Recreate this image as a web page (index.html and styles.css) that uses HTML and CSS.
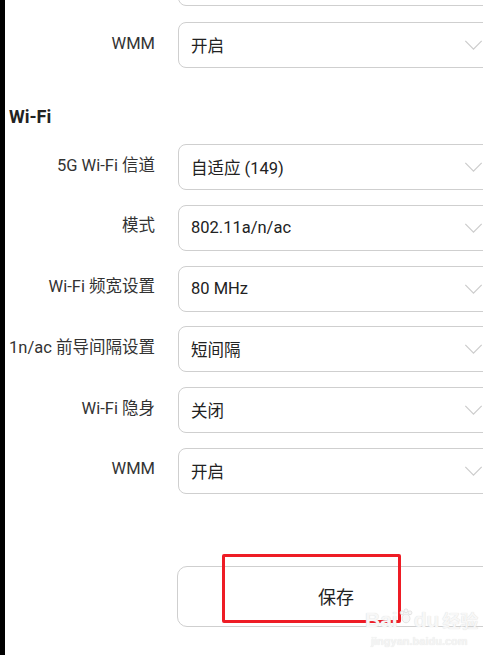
FILE: index.html
```html
<!DOCTYPE html>
<html lang="zh-CN">
  <head>
    <meta charset="UTF-8" />
    <meta name="viewport" content="width=device-width, initial-scale=1.0" />
    <title>Wi-Fi 设置</title>
    <link rel="stylesheet" href="styles.css">
  </head>
  <body>
    <div class="screen">
      <div class="form-row form-row-cut">
        <label class="form-label"></label>
        <div class="select"><span class="select-value"></span></div>
      </div>
      <div class="form-row">
        <label class="form-label">WMM</label>
        <div class="select">
          <span class="select-value">开启</span>
          <svg class="chevron" viewBox="0 0 20 11"><path d="M1 1 L10 10 L19 1" /></svg>
        </div>
      </div>

      <h3 class="section-title">Wi-Fi</h3>

      <div class="form-row">
        <label class="form-label">5G Wi-Fi 信道</label>
        <div class="select">
          <span class="select-value">自适应 (149)</span>
          <svg class="chevron" viewBox="0 0 20 11"><path d="M1 1 L10 10 L19 1" /></svg>
        </div>
      </div>
      <div class="form-row">
        <label class="form-label">模式</label>
        <div class="select">
          <span class="select-value">802.11a/n/ac</span>
          <svg class="chevron" viewBox="0 0 20 11"><path d="M1 1 L10 10 L19 1" /></svg>
        </div>
      </div>
      <div class="form-row">
        <label class="form-label">Wi-Fi 频宽设置</label>
        <div class="select">
          <span class="select-value">80 MHz</span>
          <svg class="chevron" viewBox="0 0 20 11"><path d="M1 1 L10 10 L19 1" /></svg>
        </div>
      </div>
      <div class="form-row">
        <label class="form-label">1n/ac 前导间隔设置</label>
        <div class="select">
          <span class="select-value">短间隔</span>
          <svg class="chevron" viewBox="0 0 20 11"><path d="M1 1 L10 10 L19 1" /></svg>
        </div>
      </div>
      <div class="form-row">
        <label class="form-label">Wi-Fi 隐身</label>
        <div class="select">
          <span class="select-value">关闭</span>
          <svg class="chevron" viewBox="0 0 20 11"><path d="M1 1 L10 10 L19 1" /></svg>
        </div>
      </div>
      <div class="form-row">
        <label class="form-label">WMM</label>
        <div class="select">
          <span class="select-value">开启</span>
          <svg class="chevron" viewBox="0 0 20 11"><path d="M1 1 L10 10 L19 1" /></svg>
        </div>
      </div>

      <div class="actions">
        <button class="save-btn">保存</button>
        <div class="highlight"></div>
      </div>

      <div class="watermark">
        <div class="wm-logo">
          <span>Bai</span>
          <svg class="wm-paw" viewBox="0 0 20 20">
            <circle cx="5" cy="6" r="2.4" />
            <circle cx="10" cy="3.5" r="2.4" />
            <circle cx="15" cy="6" r="2.4" />
            <ellipse cx="10" cy="13" rx="5" ry="5.5" />
          </svg>
          <span>du</span>
          <span class="wm-cn">经验</span>
        </div>
        <div class="wm-url">jingyan.baidu.com</div>
      </div>
    </div>
  </body>
</html>
```

FILE: styles.css
```css
body {
  margin: 0;
  height: 655px;
  overflow: hidden;
  background-color: #000;
  font-family: Roboto, "Noto Sans CJK SC", sans-serif;
}

.screen {
  position: relative;
  margin-left: 5px;
  height: 655px;
  overflow: hidden;
  background-color: #fff;
}

.form-row {
  display: flex;
  align-items: center;
  gap: 23px;
  margin-bottom: 14.8px;
}

.form-row-cut {
  margin-top: -40px;
  margin-bottom: 16px;
}

.form-label {
  flex: none;
  width: 150px;
  display: flex;
  justify-content: flex-end;
  white-space: nowrap;
  font-size: 16.5px;
  line-height: 20px;
  margin-top: -3px;
  color: #333;
}

.select {
  flex: none;
  box-sizing: border-box;
  width: 315px;
  height: 46px;
  display: flex;
  align-items: center;
  justify-content: space-between;
  padding: 0 9px 0 12px;
  border: 1px solid #cfcfcf;
  border-radius: 8px;
}

.select-value {
  font-size: 16.5px;
  color: #222;
}

.chevron {
  width: 19px;
  height: 10px;
  fill: none;
  stroke: #cdcdcd;
  stroke-width: 1.4;
}

.section-title {
  margin: 38px 0 17px 4px;
  font-size: 18px;
  font-weight: bold;
  color: #222;
}

.actions {
  position: relative;
  margin-top: 72px;
  padding-left: 172px;
}

.save-btn {
  box-sizing: border-box;
  width: 318px;
  height: 61px;
  border: 1px solid #cfcfcf;
  border-radius: 10px;
  background-color: #fff;
  font-family: Roboto, "Noto Sans CJK SC", sans-serif;
  font-size: 18px;
  color: #222;
}

.highlight {
  position: absolute;
  left: 217px;
  top: -12px;
  width: 179px;
  height: 69px;
  box-sizing: border-box;
  border: 3px solid #ee1c25;
  border-radius: 2px;
}

.watermark {
  position: absolute;
  left: 360px;
  top: 609px;
  color: #f7f7f7;
  text-shadow: 0 0 1px #d4d4d4;
}

.wm-logo {
  display: flex;
  align-items: center;
  font-family: Arial, "Liberation Sans", sans-serif;
  font-size: 21px;
  font-weight: bold;
  line-height: 22px;
}

.wm-paw {
  width: 16px;
  height: 16px;
  margin-top: -8px;
  fill: #f7f7f7;
  stroke: #d8d8d8;
  stroke-width: 0.8;
}

.wm-cn {
  margin-left: 3px;
  font-family: "Noto Sans CJK SC", sans-serif;
  font-size: 18px;
}

.wm-url {
  margin-top: 4px;
  margin-left: 6px;
  font-family: Arial, "Liberation Sans", sans-serif;
  font-size: 11px;
  font-weight: bold;
  color: #f4f4f4;
  text-shadow: 0 0 1px #e0e0e0;
}
```
